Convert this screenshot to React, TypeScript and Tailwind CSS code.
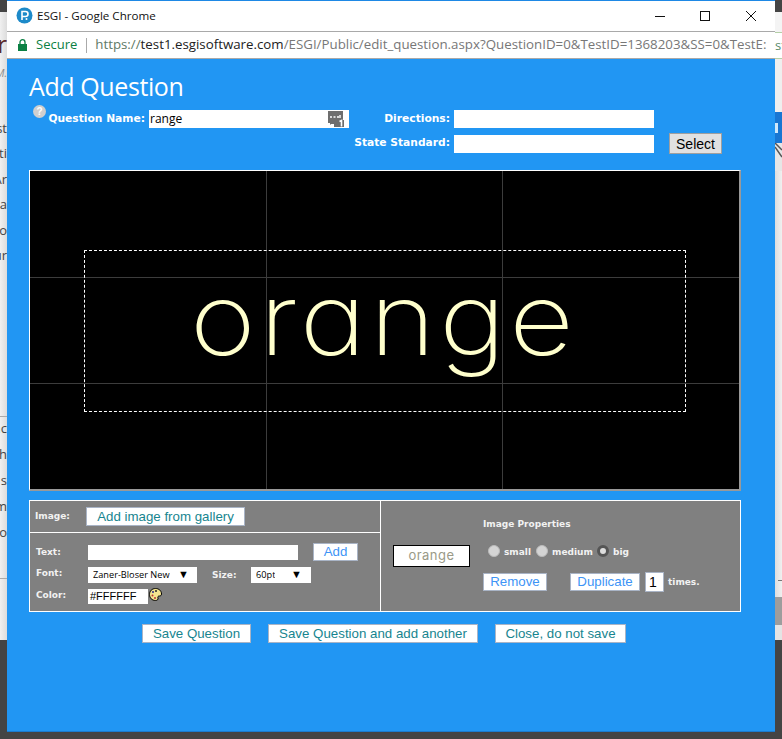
const sans = "font-['Open_Sans','Noto_Sans',sans-serif]";
const arial = "font-['Liberation_Sans',Arial,sans-serif]";
const bold = "font-['DejaVu_Sans',sans-serif] font-bold";

function Favicon() {
  return (
    <svg width="17" height="17" viewBox="0 0 17 17">
      <circle cx="8.5" cy="8.5" r="8" fill="#1d8ac9" />
      <path d="M6 13V4.5h3.5a2.5 2.5 0 0 1 0 5H6" fill="none" stroke="#fff" strokeWidth="1.6" />
      <circle cx="10.5" cy="12" r="1" fill="#fff" />
    </svg>
  );
}

function Lock() {
  return (
    <svg width="9" height="12" viewBox="0 0 9 12">
      <path d="M2 5V3.2a2.5 2.5 0 0 1 5 0V5" fill="none" stroke="#0b8043" strokeWidth="1.3" />
      <rect x="0" y="5" width="9" height="7" fill="#0b8043" />
    </svg>
  );
}

function WindowButtons() {
  return (
    <div className="flex items-center">
      <svg width="12" height="12" viewBox="0 0 12 12" className="mr-[33px]">
        <path d="M1 6.5h10" stroke="#111" strokeWidth="1" />
      </svg>
      <svg width="12" height="12" viewBox="0 0 12 12" className="mr-[34px]">
        <rect x="1.5" y="1.5" width="9" height="9" fill="none" stroke="#111" strokeWidth="1" />
      </svg>
      <svg width="12" height="12" viewBox="0 0 12 12" className="mr-[18px]">
        <path d="M1 1l10 10M11 1L1 11" stroke="#111" strokeWidth="1" />
      </svg>
    </div>
  );
}

function HelpIcon() {
  return (
    <span className={`grid h-[13px] w-[13px] place-items-center rounded-full bg-[#cfcfcf] text-[10px] font-bold leading-none text-white ${arial}`}>
      ?
    </span>
  );
}

function NumberIcon() {
  return (
    <svg width="16" height="16" viewBox="0 0 16 16">
      <path d="M0 0h15v9H16v7H6v-3H3l-1 1v-2H0z" fill="#6e6e6e" />
      <path d="M2 6h2M5.5 6h2M9 6h2M12 4v3" stroke="#fff" strokeWidth="1.4" />
      <path d="M11.5 10.5l2-1v6" fill="none" stroke="#fff" strokeWidth="1.6" />
    </svg>
  );
}

function Palette() {
  return (
    <svg width="13" height="13" viewBox="0 0 13 13">
      <path d="M6.5.5C10 .5 12.5 2.8 12.5 6c0 1.5-1 2-2 2-1.5 0-2 .8-1.5 2 .5 1.4-.8 2.5-2.500 2.5C3 12.5.5 10 .5 6.5S3 .5 6.5.5z" fill="#f4e58f" stroke="#000" />
      <circle cx="4" cy="4" r="1" fill="#2a2a8a" />
      <circle cx="7" cy="3" r="1" fill="#222" />
      <circle cx="3.5" cy="7.5" r="1" fill="#b33" />
      <circle cx="6" cy="10" r="1" fill="#b33" />
    </svg>
  );
}

function Radio({ checked }: { checked?: boolean }) {
  return (
    <span className={`inline-block h-3 w-3 shrink-0 rounded-full ${checked ? "border-[3px] border-[#555] bg-[#ddd]" : "bg-[#d4d4d4] border border-[#bbb]"}`} />
  );
}

function PanelButton({ label, blue, className }: { label: string; blue?: boolean; className: string }) {
  return (
    <button
      type="button"
      className={`flex items-center justify-center border border-[#a9b4c6] bg-white text-[13.3px] leading-none ${arial} ${blue ? "text-[#3d94f6]" : "text-[#17858f]"} ${className}`}
    >
      {label}
    </button>
  );
}

function Dropdown({ label, className }: { label: string; className: string }) {
  return (
    <div className={`flex h-4 items-center justify-between bg-white text-[9.2px] text-black ${sans} ${className}`}>
      <span className="overflow-hidden whitespace-nowrap">{label}</span>
      <span className="shrink-0 pb-[3px] text-[11px] leading-none">▼</span>
    </div>
  );
}

function Small({ children, className = "" }: { children: string; className?: string }) {
  return <span className={`text-[9px] leading-none text-[#f2f2f2] ${bold} ${className}`}>{children}</span>;
}

function LeftStrip() {
  const rows = ["st", "ti", "Ar", "la", "o", "ur"];
  const rows2 = ["ac", "th", "s", "m", "Vo"];
  return (
    <div className={`flex w-[7px] shrink-0 flex-col ${sans}`}>
      <div className="h-[12px] bg-[#444]" />
      <div className="flex h-[628px] flex-col items-end overflow-hidden bg-gradient-to-r from-[#f0f0f0] to-[#dcdcdc] text-[13px] leading-none text-[#444]">
        <div className="mt-[20px] h-[36px] text-[24px] leading-none text-[#5a2a2a]">r</div>
        <div className="h-[54px] text-[10px] italic text-[#888]">M.</div>
        {rows.map((t) => (
          <div key={t} className="h-[25.4px]">{t}</div>
        ))}
        <div className="mt-[142px] h-px w-full bg-[#aaa]" />
        <div className="mt-[5px] flex flex-col items-end">
          {rows2.map((t) => (
            <div key={t} className="h-[26px]">{t}</div>
          ))}
        </div>
        <div className="mt-[26px] h-px w-full bg-[#aaa]" />
      </div>
      <div className="flex-1 bg-[#444]" />
    </div>
  );
}

function RightStrip() {
  return (
    <div className={`flex w-[7px] shrink-0 flex-col ${sans}`}>
      <div className="h-[12px] bg-[#444]" />
      <div className="h-[20px] bg-[#f4f4f4]" />
      <div className="flex h-[27px] items-center overflow-hidden border-y border-[#b5d0a8] bg-white text-[13px] text-[#5a8a6a]">st</div>
      <div className="h-[53px] bg-[#efefef]" />
      <div className="flex h-[31px] items-center bg-[#1976d2]">
        <div className="h-[10px] w-[3px] bg-[#cfe8fa]" />
      </div>
      <div className="h-[28px] bg-[#e6e6e6]">
        <svg width="7" height="18" viewBox="0 0 7 18">
          <path d="M0 0l7 7M0 4l7 10" stroke="#555" strokeWidth="1.5" />
        </svg>
      </div>
      <div className="h-[426px] bg-gradient-to-r from-[#dedede] to-[#f0f0f0]">
        <div className="ml-[3px] mt-[409px] h-px w-[4px] bg-[#777]" />
      </div>
      <div className="h-[28px] bg-[#9d9d9d]" />
      <div className="h-[15px] bg-[#e4e4e4]" />
      <div className="flex-1 bg-[#444]" />
    </div>
  );
}

function TitleBar() {
  return (
    <>
      <div className="flex h-[31px] items-center justify-between border-t border-[#1e88e5] bg-white pl-[9px]">
        <div className="flex items-center gap-[4px]">
          <Favicon />
          <span className={`text-[11.6px] text-[#111] ${sans}`}>ESGI - Google Chrome</span>
        </div>
        <WindowButtons />
      </div>
      <div className={`flex h-[28px] items-center overflow-hidden border-y border-[#a9a9a9] bg-white pl-[11px] text-[13.3px] whitespace-nowrap ${sans}`}>
        <Lock />
        <span className="ml-[9px] text-[13px] text-[#0b8043]">Secure</span>
        <span className="ml-[9px] h-[15px] w-px bg-[#aaa]" />
        <span className="ml-[8px] text-[#5f7a66]">https://</span>
        <span className="text-[#222]">test1.esgisoftware.com</span>
        <span className="overflow-hidden pr-[6px] text-[#777]">/ESGI/Public/edit_question.aspx?QuestionID=0&amp;TestID=1368203&amp;SS=0&amp;TestE:</span>
      </div>
    </>
  );
}

function Header() {
  return (
    <div className="grid grid-cols-[120px_200px_105px_200px_1fr] items-center text-white">
      <div className={`flex h-[18px] items-center justify-between pl-1 pr-1 ${bold}`}>
        <span className="mt-[-15px]"><HelpIcon /></span>
        <span className="whitespace-nowrap text-[10.7px]">Question Name:</span>
      </div>
      <div className="flex h-[18px] items-center justify-between bg-white pl-px pr-[5px]">
        <span className={`text-[12px] text-black ${sans}`}>range</span>
        <NumberIcon />
      </div>
      <div className={`pr-1 text-right text-[10.7px] ${bold}`}>Directions:</div>
      <input readOnly className="h-[18px] bg-white" />
      <div />
      <div className="col-span-5 h-[5px]" />
      <div />
      <div />
      <div className={`whitespace-nowrap pr-1 text-right text-[10.7px] ${bold}`}>State Standard:</div>
      <input readOnly className="h-[18px] bg-white" />
      <div className="flex pl-[15px]">
        <button type="button" className={`h-[21px] w-[53px] border border-[#9f9f9f] bg-[#e1e1e1] text-[14px] leading-none text-black ${arial}`}>
          Select
        </button>
      </div>
    </div>
  );
}

function Canvas() {
  return (
    <div className="relative mt-4 h-[321px] w-[712px] overflow-hidden border-t border-l border-white border-r-2 border-r-[#999] border-b-2 border-b-[#999] bg-black">
      <div className="absolute bottom-0 left-[236px] top-0 w-px bg-[#3c3c3c]" />
      <div className="absolute bottom-0 left-[472px] top-0 w-px bg-[#3c3c3c]" />
      <div className="absolute left-0 right-0 top-[106px] h-px bg-[#3c3c3c]" />
      <div className="absolute left-0 right-0 top-[212px] h-px bg-[#3c3c3c]" />
      <div className="absolute left-[54px] top-[79px] h-[162px] w-[602px] border border-dashed border-white" />
      <div className="absolute left-[160px] top-[73px] origin-left scale-x-[1.12] whitespace-nowrap font-['Inter',sans-serif] text-[100px] font-[250] leading-[150px] tracking-[3.4px] text-[#ffffcc] [font-feature-settings:'cv11']">
        orange
      </div>
    </div>
  );
}

function Panels() {
  return (
    <div className="mt-[9px] flex h-[112px] w-[712px] border border-white bg-[#808080]">
      <div className="flex w-[351px] flex-col border-r border-white">
        <div className="flex h-[32px] items-center border-b border-white pl-[5px]">
          <Small className="w-[51px]">Image:</Small>
          <PanelButton label="Add image from gallery" className="h-[19px] w-[159px]" />
        </div>
        <div className="flex flex-col pl-[6px] pt-[10px]">
          <div className="flex items-center">
            <Small className="w-[52px]">Text:</Small>
            <input readOnly className="h-[15px] w-[210px] bg-white" />
            <PanelButton label="Add" blue className="ml-[15px] h-[18px] w-[45px]" />
          </div>
          <div className="mt-[6px] flex items-center">
            <Small className="mb-[3px] w-[52px]">Font:</Small>
            <Dropdown label="Zaner-Bloser New" className="w-[109px] pl-[5px] pr-[8px]" />
            <Small className="ml-[15px] w-[39px]">Size:</Small>
            <Dropdown label="60pt" className="w-[60px] pl-[5px] pr-[9px]" />
          </div>
          <div className="mt-[6px] flex items-center">
            <Small className="mb-[3px] w-[52px]">Color:</Small>
            <div className={`flex h-[15px] w-[60px] items-center bg-white pl-[2px] text-[11px] text-black ${arial}`}>#FFFFFF</div>
            <span className="ml-[1px] mt-[-4px]"><Palette /></span>
          </div>
        </div>
      </div>
      <div className="flex flex-1 items-start pl-3">
        <div className="mt-[44px] flex h-[22px] w-[77px] items-center justify-center border border-black bg-white font-['Inter',sans-serif] text-[13px] tracking-[0.5px] text-[#9a9a88]">
          orange
        </div>
        <div className="ml-[13px] flex flex-col pt-[19px]">
          <Small>Image Properties</Small>
          <div className="mt-[16px] flex items-center pl-[5px]">
            <Radio />
            <Small className="ml-[4px] mt-[3px] w-[32px]">small</Small>
            <Radio />
            <Small className="ml-[4px] mt-[3px] w-[45px]">medium</Small>
            <Radio checked />
            <Small className="ml-[4px] mt-[3px]">big</Small>
          </div>
          <div className="mt-[15px] flex items-center">
            <PanelButton label="Remove" blue className="h-[18px] w-[64px]" />
            <PanelButton label="Duplicate" blue className="ml-[23px] h-[18px] w-[70px]" />
            <div className={`ml-[5px] flex h-5 w-[19px] items-center border border-[#a9b4c6] bg-white pl-[3px] text-[14px] text-black ${arial}`}>1</div>
            <Small className="ml-[4px]">times.</Small>
          </div>
        </div>
      </div>
    </div>
  );
}

function SaveRow() {
  return (
    <div className="ml-[113px] mt-3 flex gap-[17px]">
      <PanelButton label="Save Question" className="h-[19px] w-[109px]" />
      <PanelButton label="Save Question and add another" className="h-[19px] w-[210px]" />
      <PanelButton label="Close, do not save" className="h-[19px] w-[131px]" />
    </div>
  );
}

export default function App() {
  return (
    <div className="flex h-[739px] w-[782px] overflow-hidden bg-[#444]">
      <LeftStrip />
      <div className="flex h-[732px] w-[768px] shrink-0 flex-col">
        <TitleBar />
        <div className="flex-1 border-b border-[#1b7cd0] bg-[#2196f3] pl-[22px]">
          <h1 className={`mt-[9px] h-[42px] text-[25px] leading-[36px] tracking-[-0.4px] text-white ${sans}`}>Add Question</h1>
          <Header />
          <Canvas />
          <Panels />
          <SaveRow />
        </div>
      </div>
      <RightStrip />
    </div>
  );
}
